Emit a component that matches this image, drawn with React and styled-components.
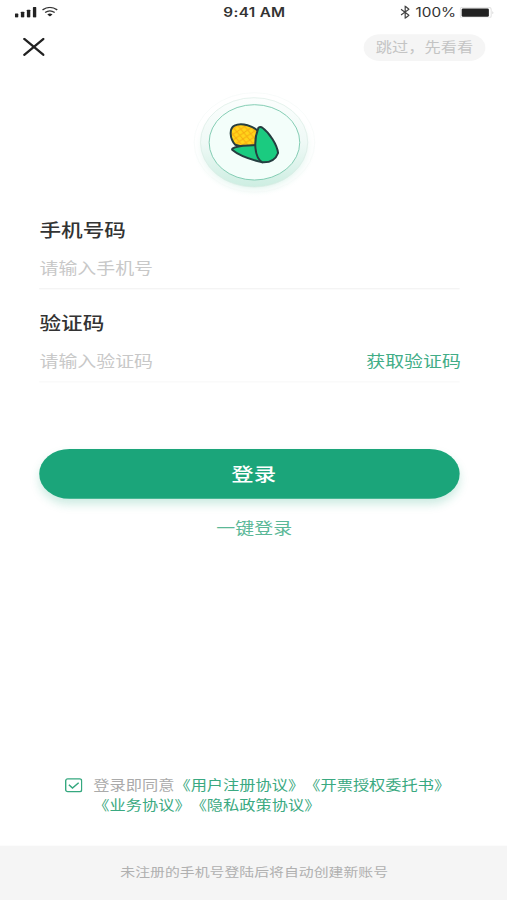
import { useState } from "react";
import styled, { createGlobalStyle } from "styled-components";

const GlobalStyle = createGlobalStyle`
  * {
    box-sizing: border-box;
  }

  body {
    margin: 0;
    background: #fff;
  }

  input,
  button {
    font-family: inherit;
    border: none;
    outline: none;
    padding: 0;
    background: none;
  }
`;

function SignalIcon() {
  return (
    <Icon width="16.3" height="9.9" viewBox="0 0 22 11">
      <rect x="0" y="6.8" width="3.4" height="4" rx="0.7" />
      <rect x="6" y="5" width="3.4" height="5.8" rx="0.7" />
      <rect x="12" y="3" width="3.4" height="7.8" rx="0.7" />
      <rect x="18" y="0.4" width="3.6" height="10.4" rx="0.7" />
    </Icon>
  );
}

function WifiIcon() {
  return (
    <Icon width="11.8" height="9" viewBox="0 0 16 10">
      <path d="M0.6 3.2 Q8 -1.8 15.4 3.2" fill="none" stroke="#333" strokeWidth="1.4" />
      <path d="M3.2 5.9 Q8 2.6 12.8 5.9" fill="none" stroke="#333" strokeWidth="1.4" />
      <path d="M5.4 7.8 Q8 5.8 10.6 7.8 L8 9.8 Z" />
    </Icon>
  );
}

function BluetoothIcon() {
  return (
    <Icon width="7.4" height="12" viewBox="0 0 10 13">
      <path d="M0.8 3.7 L8.8 9.4 L5 12.4 V0.6 L8.8 3.6 L0.8 9.3" fill="none" stroke="#444" strokeWidth="1.2" />
    </Icon>
  );
}

function BatteryIcon() {
  return (
    <Icon width="25.9" height="10.8" viewBox="0 0 35 12">
      <rect x="0.5" y="0.5" width="31" height="11" rx="2.5" fill="#fff" stroke="#e2e2e2" />
      <rect x="2" y="1.8" width="27.2" height="8.4" rx="1.4" />
      <path d="M33 4.7 Q34.4 6 33 7.3 Z" fill="#aaa" />
    </Icon>
  );
}

function CornLogo() {
  return (
    <Icon width="110.9" height="103.75" viewBox="0 0 450 345">
      <defs>
        <linearGradient id="halo" x1="0" y1="0" x2="0" y2="1">
          <stop offset="0" stopColor="#fbfefd" />
          <stop offset="0.5" stopColor="#eff9f6" />
          <stop offset="1" stopColor="#cdeee2" />
        </linearGradient>
        <radialGradient id="glow">
          <stop offset="0.78" stopColor="#cfefe4" stopOpacity="0.85" />
          <stop offset="1" stopColor="#ffffff" stopOpacity="0" />
        </radialGradient>
        <pattern id="kernels" width="21" height="19" patternUnits="userSpaceOnUse" patternTransform="rotate(8)">
          <path d="M0 0 L21 19 M21 0 L0 19" stroke="#f7ad10" strokeWidth="3.2" fill="none" />
        </pattern>
      </defs>
      <ellipse cx="224" cy="188" rx="186" ry="148" fill="url(#glow)" />
      <ellipse cx="224" cy="171" rx="181" ry="149" fill="#fff" fillOpacity="0.4" stroke="#f5f9f7" strokeWidth="2" />
      <ellipse cx="223" cy="171" rx="161" ry="134" fill="url(#halo)" stroke="#d9ebe4" strokeWidth="2" />
      <ellipse cx="224" cy="171" rx="136" ry="113" fill="#f3fefa" stroke="#7cc9ae" strokeWidth="2.8" />
      <path d="M166 178 C149 158 148 129 164 121 C184 110 223 121 239 142 L232 196 Z" fill="#ffd51a" />
      <path d="M166 178 C149 158 148 129 164 121 C184 110 223 121 239 142 L232 196 Z" fill="url(#kernels)" stroke="#253e40" strokeWidth="6" strokeLinejoin="round" />
      <path d="M158 190 C178 177 209 183 236 178 L248 231 C210 222 178 211 158 194 Q156 192 158 190 Z" fill="#1bcb80" stroke="#253e40" strokeWidth="6" strokeLinejoin="round" />
      <path d="M236 127 Q242 122 249 128 C269 143 292 178 295 203 C288 222 270 232 248 231 C223 217 221 165 236 127 Z" fill="#1bcb80" stroke="#253e40" strokeWidth="6" strokeLinejoin="round" />
    </Icon>
  );
}

function App() {
  const [phone, setPhone] = useState("");
  const [code, setCode] = useState("");
  const [agreed, setAgreed] = useState(true);

  return (
    <Viewport>
      <GlobalStyle />
      <Screen>
        <StatusBar>
          <StatusGroup>
            <SignalIcon />
            <WifiIcon />
          </StatusGroup>
          <Time>9:41 AM</Time>
          <StatusGroup $end>
            <BluetoothIcon />
            <Percent>100%</Percent>
            <BatteryIcon />
          </StatusGroup>
        </StatusBar>

        <NavBar>
          <CloseButton aria-label="close">
            <Icon width="16.3" height="17" viewBox="0 0 22 19">
              <path d="M1.3 1.3 L20.5 17.3 M20.5 1.3 L1.3 17.3" fill="none" stroke="#222" strokeWidth="2.3" strokeLinecap="round" />
            </Icon>
          </CloseButton>
          <SkipButton>跳过，先看看</SkipButton>
        </NavBar>

        <LogoWrapper>
          <CornLogo />
        </LogoWrapper>

        <Form onSubmit={(e) => e.preventDefault()}>
          <FormField>
            <Label htmlFor="phone">手机号码</Label>
            <InputRow>
              <Input id="phone" placeholder="请输入手机号" value={phone} onChange={(e) => setPhone(e.target.value)} />
            </InputRow>
          </FormField>
          <FormField>
            <Label htmlFor="code">验证码</Label>
            <InputRow $light>
              <Input id="code" placeholder="请输入验证码" value={code} onChange={(e) => setCode(e.target.value)} />
              <TextButton type="button">获取验证码</TextButton>
            </InputRow>
          </FormField>
          <SubmitButton type="submit">登录</SubmitButton>
          <QuickLogin>
            <TextButton type="button" $soft>一键登录</TextButton>
          </QuickLogin>
        </Form>

        <Agreement>
          <Checkbox type="button" aria-label="agree" onClick={() => setAgreed(!agreed)}>
            <Icon width="13" height="13" viewBox="0 0 17.6 14.4">
              <rect x="0.8" y="0.8" width="16" height="12.8" rx="2" fill="none" stroke="#35a87f" strokeWidth="1.4" />
              {agreed && <path d="M4 6.6 L7.6 10 L13.8 4.6" fill="none" stroke="#35a87f" strokeWidth="1.5" />}
            </Icon>
          </Checkbox>
          <AgreementText>
            登录即同意<Link>《用户注册协议》</Link><Link>《开票授权委托书》</Link>
            <br />
            <Link>《业务协议》</Link><Link>《隐私政策协议》</Link>
          </AgreementText>
        </Agreement>

        <Footer>未注册的手机号登陆后将自动创建新账号</Footer>
      </Screen>
    </Viewport>
  );
}

const Viewport = styled.div`
  width: 507px;
  height: 900px;
  overflow: hidden;
`;

/* 375x812 artboard stretched over the viewport */
const Screen = styled.main`
  display: flex;
  flex-direction: column;
  width: 375px;
  height: 812px;
  background: #fff;
  transform: scale(1.352, 1.1084);
  transform-origin: 0 0;
  font-family: "Liberation Sans", "Noto Sans CJK SC", sans-serif;
  text-spacing-trim: space-all;
`;

const Icon = styled.svg.attrs({ preserveAspectRatio: "none" })`
  display: block;
  flex: none;
  fill: #222;
`;

const StatusBar = styled.header`
  display: grid;
  grid-template-columns: 1fr auto 1fr;
  align-items: center;
  height: 22px;
  padding: 0 9.6px 0 11px;
  color: #333;
`;

const StatusGroup = styled.div`
  display: flex;
  align-items: center;
  justify-content: ${(props) => (props.$end ? "flex-end" : "flex-start")};
  gap: 4px;
`;

const Time = styled.span`
  font-family: Inter, sans-serif;
  font-size: 11.3px;
  font-weight: 600;
  letter-spacing: 0.25px;
`;

const Percent = styled.span`
  font-family: Inter, sans-serif;
  font-size: 11.3px;
  margin-right: -1.8px;
`;

const NavBar = styled.nav`
  display: flex;
  align-items: center;
  justify-content: space-between;
  height: 24px;
  margin-top: 8.7px;
  padding: 0 16px 0 16.5px;
`;

const CloseButton = styled.button`
  display: flex;
`;

const SkipButton = styled.button`
  width: 90px;
  height: 24px;
  border-radius: 12px;
  background: #f5f5f5;
  color: #c4c4c4;
  font-size: 12px;
  line-height: 24px;
`;

const LogoWrapper = styled.div`
  display: flex;
  justify-content: center;
  margin: 22px 0 0 2px;
`;

const Form = styled.form`
  width: 311px;
  margin: 17.2px 0 0 29.2px;
`;

const FormField = styled.div`
  height: 84px;
`;

const Label = styled.label`
  display: block;
  height: 20px;
  padding-top: 1.2px;
  color: #333;
  font-size: 16px;
  font-weight: 500;
  line-height: 20px;
`;

const InputRow = styled.div`
  display: flex;
  align-items: center;
  justify-content: space-between;
  height: 43px;
  padding-top: 6px;
  border-bottom: 1px solid ${(props) => (props.$light ? "#f8f8f8" : "#f2f2f2")};
`;

const Input = styled.input`
  width: 180px;
  height: 24px;
  font-size: 14px;
  color: #333;

  &::placeholder {
    color: #c8c8c8;
    opacity: 1;
  }
`;

const TextButton = styled.button`
  margin-right: -0.7px;
  color: ${(props) => (props.$soft ? "#5bb897" : "#42ad87")};
  font-size: 14px;
  line-height: 20px;
`;

const SubmitButton = styled.button`
  display: block;
  width: 100%;
  height: 44.5px;
  margin-top: 39.5px;
  padding-left: 6px;
  border-radius: 23px;
  background: #1ba57a;
  box-shadow: 0 5px 8px rgba(27, 165, 122, 0.22);
  color: #fff;
  font-size: 16.6px;
  font-weight: 500;
`;

const QuickLogin = styled.div`
  display: flex;
  justify-content: center;
  margin: 17px 0 0 6px;
`;

const Agreement = styled.div`
  display: flex;
  align-items: flex-start;
  gap: 7.6px;
  margin: auto 0 27.4px 48.4px;
`;

const Checkbox = styled.button`
  display: flex;
  margin-top: 2px;
`;

const AgreementText = styled.p`
  margin: 0;
  color: #aaa;
  font-size: 12px;
  line-height: 18px;
  white-space: nowrap;
`;

const Link = styled.span`
  color: #3aa981;
`;

const Footer = styled.footer`
  height: 49px;
  padding-left: 1px;
  background: #f5f5f5;
  color: #b0b0b0;
  font-size: 11px;
  line-height: 48px;
  text-align: center;
`;

export default App;
